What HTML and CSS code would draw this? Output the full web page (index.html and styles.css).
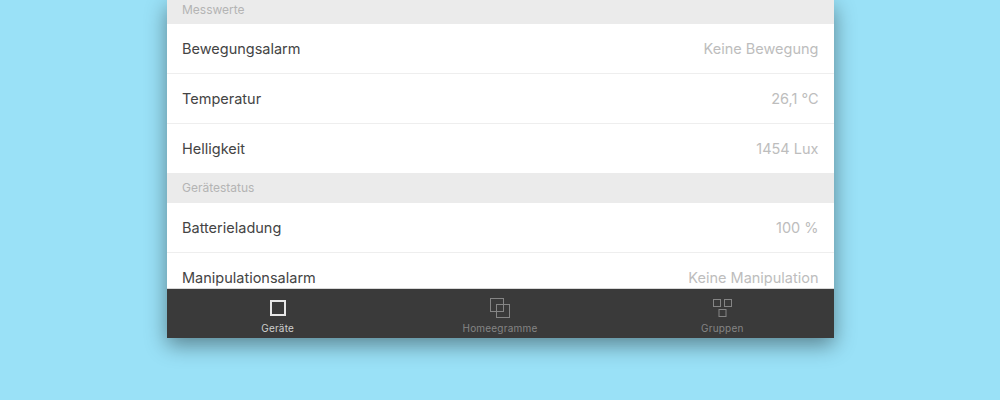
FILE: index.html
```html
<!DOCTYPE html>
<html lang="de">
<head>
<meta charset="UTF-8">
<meta name="viewport" content="width=device-width, initial-scale=1.0">
<title>Geräte</title>
<link rel="stylesheet" href="styles.css">
</head>
<body>

<div class="phone">
    <div class="list">
        <div class="section">Messwerte</div>
        <div class="row"><span class="name">Bewegungsalarm</span><span class="value">Keine Bewegung</span></div>
        <div class="row"><span class="name">Temperatur</span><span class="value">26,1 °C</span></div>
        <div class="row row-last"><span class="name">Helligkeit</span><span class="value">1454 Lux</span></div>
        <div class="section section-mid">Gerätestatus</div>
        <div class="row"><span class="name">Batterieladung</span><span class="value">100 %</span></div>
        <div class="row row-last"><span class="name">Manipulationsalarm</span><span class="value">Keine Manipulation</span></div>
    </div>
    <div class="tabbar">
        <div class="tab tab-active">
            <svg class="icon" width="22" height="22" viewBox="0 0 22 22"><rect x="4" y="4" width="14" height="14" fill="none" stroke="#e6e6e6" stroke-width="2"/></svg>
            <span>Geräte</span>
        </div>
        <div class="tab">
            <svg class="icon" width="22" height="22" viewBox="0 0 22 22" fill="none" stroke="#858585"><rect x="1.5" y="1.5" width="13" height="13"/><rect x="7.5" y="7.5" width="13" height="13"/></svg>
            <span>Homeegramme</span>
        </div>
        <div class="tab">
            <svg class="icon" width="22" height="22" viewBox="0 0 22 22" fill="none" stroke="#858585"><rect x="2.5" y="2.5" width="7" height="7"/><rect x="13.5" y="2.5" width="7" height="7"/><rect x="8" y="12.5" width="7" height="7"/></svg>
            <span>Gruppen</span>
        </div>
    </div>
</div>

</body>
</html>
```

FILE: styles.css
```css
html, body {
    height: 100%;
}
body {
    margin: 0;
    background-color: #9ae1f7;
    font-family: 'Inter', 'Liberation Sans', sans-serif;
    overflow: hidden;
}
.phone {
    width: 667px;
    height: 338px;
    margin: 0 auto;
    display: flex;
    flex-direction: column;
    box-shadow: 0 7px 20px rgba(0, 0, 0, 0.42);
}
.list {
    height: 288px;
    overflow: hidden;
    background: #fff;
    border-bottom: 1px solid #d8d8d8;
}
.section {
    height: 29px;
    padding: 0 15px 0 15.5px;
    background: #ebebeb;
    color: #b4b4b4;
    font-size: 12px;
    line-height: 29px;
}
.section:first-child {
    margin-top: -5px;
}
.section-mid {
    height: 30px;
}
.row {
    height: 49px;
    padding: 0 15px 0 15.5px;
    display: flex;
    justify-content: space-between;
    align-items: center;
    border-bottom: 1px solid #eeeeee;
    font-size: 14.5px;
}
.row-last {
    border-bottom: none;
}
.name {
    color: #444444;
}
.value {
    color: #bdbdbd;
}
.tabbar {
    height: 49px;
    background: #3a3a3a;
    display: flex;
    justify-content: space-around;
}
.tab {
    width: 222px;
    display: flex;
    flex-direction: column;
    align-items: center;
    color: #858585;
    font-size: 10px;
    letter-spacing: 0.2px;
}
.tab-active {
    color: #cfcfcf;
}
.icon {
    margin-top: 8px;
    margin-bottom: 3px;
}
```
